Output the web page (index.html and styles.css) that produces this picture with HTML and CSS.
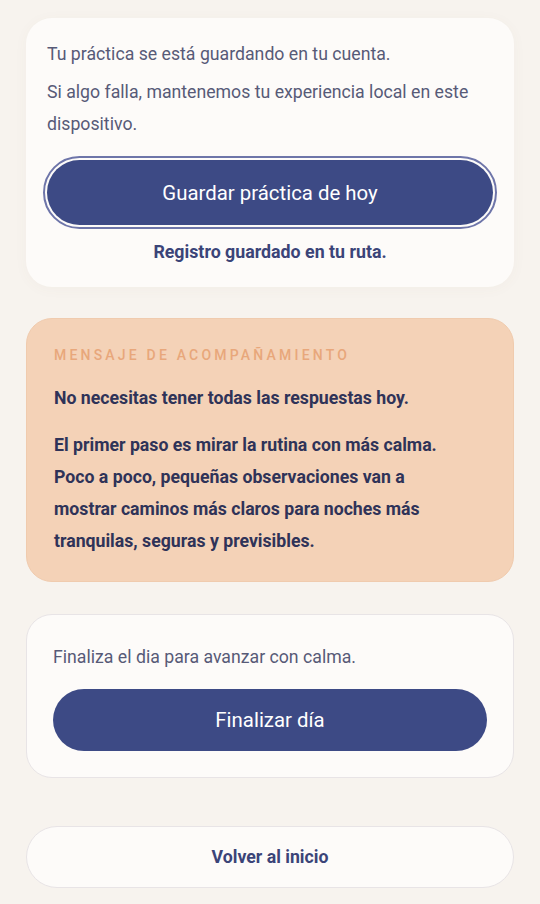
FILE: index.html
```html
<!DOCTYPE html>
<html lang="es">
<head>
<meta charset="utf-8">
<title>Práctica</title>
<link rel="stylesheet" href="styles.css">
</head>
<body>
<main class="page">
  <section class="card card-save">
    <p class="muted">Tu práctica se está guardando en tu cuenta.</p>
    <p class="muted second">Si algo falla, mantenemos tu experiencia local en este dispositivo.</p>
    <button class="btn btn-primary btn-focus" type="button">Guardar práctica de hoy</button>
    <p class="status">Registro guardado en tu ruta.</p>
  </section>

  <section class="card card-message">
    <p class="label">Mensaje de acompañamiento</p>
    <p class="strong">No necesitas tener todas las respuestas hoy.</p>
    <p class="strong body">El primer paso es mirar la rutina con más calma. Poco a poco, pequeñas observaciones van a mostrar caminos más claros para noches más tranquilas, seguras y previsibles.</p>
  </section>

  <section class="card card-finish">
    <p class="muted">Finaliza el dia para avanzar con calma.</p>
    <button class="btn btn-primary btn-finish" type="button">Finalizar día</button>
  </section>

  <button class="btn btn-back" type="button">Volver al inicio</button>
</main>
</body>
</html>
```

FILE: styles.css
```css
* { box-sizing: border-box; }

html, body {
  margin: 0;
  padding: 0;
  background: #f7f3ee;
}

body {
  font-family: Roboto, "Noto Sans", "Liberation Sans", sans-serif;
  color: #2f3358;
}

.page {
  display: flex;
  flex-direction: column;
  padding: 18px 26px 16px;
}

p { margin: 0; }

.card {
  border-radius: 26px;
  background: #fdfbf9;
}

.card-save {
  padding: 20px 21px 23px;
  box-shadow: 0 2px 14px rgba(120, 100, 80, 0.04);
}

.muted {
  font-size: 17.7px;
  line-height: 32px;
  color: #575a77;
}

.second { margin-top: 6px; }

.btn {
  display: flex;
  align-items: center;
  justify-content: center;
  width: 100%;
  border: none;
  font-family: inherit;
  cursor: pointer;
}

.btn-primary {
  background: #3d4a85;
  color: #ffffff;
  font-size: 20.4px;
  font-weight: 400;
  border-radius: 40px;
}

.btn-focus {
  margin-top: 20px;
  height: 65px;
  outline: 2px solid #6e75a9;
  outline-offset: 2px;
}

.status {
  margin-top: 15px;
  text-align: center;
  font-size: 17.8px;
  line-height: 24px;
  font-weight: 700;
  color: #3b4478;
}

.card-message {
  margin-top: 31px;
  background: #f4d2b7;
  border: 1px solid #f0cbae;
  padding: 27px 27px 24px;
}

.label {
  font-size: 14px;
  line-height: 18px;
  font-weight: 500;
  letter-spacing: 3.2px;
  text-transform: uppercase;
  color: #e8a77b;
}

.strong {
  margin-top: 18px;
  font-size: 17.7px;
  line-height: 32px;
  font-weight: 700;
  color: #2f3358;
}

.strong.body {
  margin-top: 15px;
  max-width: 400px;
}

.card-finish {
  margin-top: 32px;
  border: 1px solid #e8e4e6;
  padding: 28px 26px 26px;
}

.card-finish .muted { line-height: 28px; }

.btn-finish {
  margin-top: 18px;
  height: 62px;
}

.btn-back {
  margin-top: 48px;
  height: 62px;
  border-radius: 31px;
  background: #fdfbf9;
  border: 1px solid #e8e4e6;
  font-size: 17.7px;
  font-weight: 700;
  color: #3b4478;
}
```
